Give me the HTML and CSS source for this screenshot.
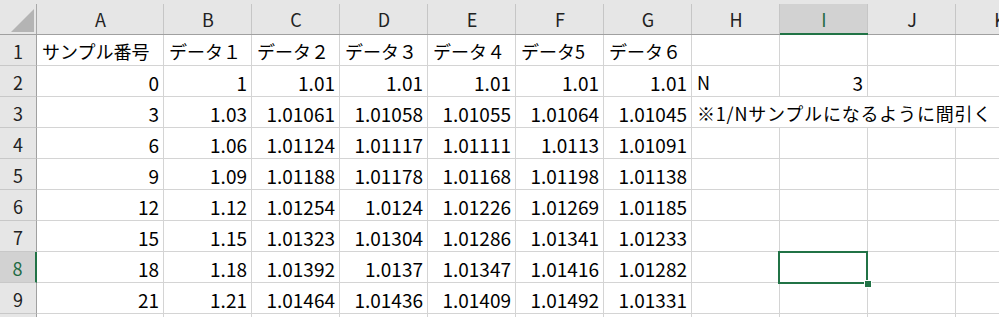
FILE: index.html
```html
<!DOCTYPE html>
<html lang="ja">
<head>
    <meta charset="UTF-8">
    <title>Sheet1</title>
    <link rel="stylesheet" href="styles.css">
</head>
<body>
    <div class="sheet">
        <div class="hd corner">
            <svg width="36" height="34" viewBox="0 0 36 34"><polygon points="10,32 33,32 33,9" fill="#b4b4b4"/></svg>
        </div>
        <div class="hd col">A</div>
        <div class="hd col">B</div>
        <div class="hd col">C</div>
        <div class="hd col">D</div>
        <div class="hd col">E</div>
        <div class="hd col">F</div>
        <div class="hd col">G</div>
        <div class="hd col">H</div>
        <div class="hd col sel-col">I</div>
        <div class="hd col">J</div>
        <div class="hd col">K</div>

        <div class="hd row">1</div>
        <div class="c">サンプル番号</div>
        <div class="c">データ１</div>
        <div class="c">データ２</div>
        <div class="c">データ３</div>
        <div class="c">データ４</div>
        <div class="c">データ5</div>
        <div class="c">データ６</div>
        <div class="c"></div>
        <div class="c"></div>
        <div class="c"></div>
        <div class="c"></div>

        <div class="hd row">2</div>
        <div class="c n">0</div>
        <div class="c n">1</div>
        <div class="c n">1.01</div>
        <div class="c n">1.01</div>
        <div class="c n">1.01</div>
        <div class="c n">1.01</div>
        <div class="c n">1.01</div>
        <div class="c">N</div>
        <div class="c n">3</div>
        <div class="c"></div>
        <div class="c"></div>

        <div class="hd row">3</div>
        <div class="c n">3</div>
        <div class="c n">1.03</div>
        <div class="c n">1.01061</div>
        <div class="c n">1.01058</div>
        <div class="c n">1.01055</div>
        <div class="c n">1.01064</div>
        <div class="c n">1.01045</div>
        <div class="c note">※1/Nサンプルになるように間引く</div>

        <div class="hd row">4</div>
        <div class="c n">6</div>
        <div class="c n">1.06</div>
        <div class="c n">1.01124</div>
        <div class="c n">1.01117</div>
        <div class="c n">1.01111</div>
        <div class="c n">1.0113</div>
        <div class="c n">1.01091</div>
        <div class="c"></div>
        <div class="c"></div>
        <div class="c"></div>
        <div class="c"></div>

        <div class="hd row">5</div>
        <div class="c n">9</div>
        <div class="c n">1.09</div>
        <div class="c n">1.01188</div>
        <div class="c n">1.01178</div>
        <div class="c n">1.01168</div>
        <div class="c n">1.01198</div>
        <div class="c n">1.01138</div>
        <div class="c"></div>
        <div class="c"></div>
        <div class="c"></div>
        <div class="c"></div>

        <div class="hd row">6</div>
        <div class="c n">12</div>
        <div class="c n">1.12</div>
        <div class="c n">1.01254</div>
        <div class="c n">1.0124</div>
        <div class="c n">1.01226</div>
        <div class="c n">1.01269</div>
        <div class="c n">1.01185</div>
        <div class="c"></div>
        <div class="c"></div>
        <div class="c"></div>
        <div class="c"></div>

        <div class="hd row">7</div>
        <div class="c n">15</div>
        <div class="c n">1.15</div>
        <div class="c n">1.01323</div>
        <div class="c n">1.01304</div>
        <div class="c n">1.01286</div>
        <div class="c n">1.01341</div>
        <div class="c n">1.01233</div>
        <div class="c"></div>
        <div class="c"></div>
        <div class="c"></div>
        <div class="c"></div>

        <div class="hd row sel-row">8</div>
        <div class="c n">18</div>
        <div class="c n">1.18</div>
        <div class="c n">1.01392</div>
        <div class="c n">1.0137</div>
        <div class="c n">1.01347</div>
        <div class="c n">1.01416</div>
        <div class="c n">1.01282</div>
        <div class="c"></div>
        <div class="c active"></div>
        <div class="c"></div>
        <div class="c"></div>

        <div class="hd row">9</div>
        <div class="c n">21</div>
        <div class="c n">1.21</div>
        <div class="c n">1.01464</div>
        <div class="c n">1.01436</div>
        <div class="c n">1.01409</div>
        <div class="c n">1.01492</div>
        <div class="c n">1.01331</div>
        <div class="c"></div>
        <div class="c"></div>
        <div class="c"></div>
        <div class="c"></div>

        <div class="hd row"></div>
        <div class="c"></div>
        <div class="c"></div>
        <div class="c"></div>
        <div class="c"></div>
        <div class="c"></div>
        <div class="c"></div>
        <div class="c"></div>
        <div class="c"></div>
        <div class="c"></div>
        <div class="c"></div>
        <div class="c"></div>
    </div>
</body>
</html>
```

FILE: styles.css
```css
body {
    margin: 0;
    overflow: hidden;
    background: #fff;
    font-family: "Noto Sans CJK JP", "Noto Sans", sans-serif;
    font-size: 18px;
    color: #000;
}
.sheet {
    display: grid;
    grid-template-columns: 37px 127px repeat(10, 88px);
    grid-template-rows: 35px repeat(10, 31px);
    width: 1132px;
}
.sheet > div {
    box-sizing: border-box;
    display: flex;
    align-items: center;
    white-space: nowrap;
    overflow: hidden;
}
.c {
    border-right: 1px solid #d4d4d4;
    border-bottom: 1px solid #d4d4d4;
    padding: 2px 4px 0 5px;
}
.n {
    justify-content: flex-end;
    font-size: 19px;
}
.note {
    grid-column: span 4;
    border-right: none;
    letter-spacing: 0.8px;
}
.hd {
    background: #e6e6e6;
    justify-content: center;
    color: #222;
}
.col {
    border-bottom: 1px solid #a0a0a0;
    background: linear-gradient(#c6c6c6, #c6c6c6) right 4px / 1px calc(100% - 4px) no-repeat, #e6e6e6;
    padding-top: 4px;
}
.corner {
    border-bottom: 1px solid #a0a0a0;
    background: linear-gradient(#a8a8a8, #a8a8a8) right 4px / 1px calc(100% - 4px) no-repeat, #e6e6e6;
    align-items: flex-start !important;
}
.corner svg {
    display: block;
}
.row {
    border-right: 1px solid #a0a0a0;
    border-bottom: 1px solid #c8c8c8;
    padding-top: 2px;
}
.sel-col {
    background: linear-gradient(#c6c6c6, #c6c6c6) right 4px / 1px calc(100% - 4px) no-repeat,
        linear-gradient(#e6e6e6 4px, #d2d2d2 4px);
    border-bottom: 2px solid #217346;
    color: #1e6b43;
}
.sel-row {
    background: #d2d2d2;
    border-right: 2px solid #217346;
    color: #1e6b43;
}
.active {
    position: relative;
    overflow: visible !important;
}
.active::after {
    content: "";
    position: absolute;
    left: -2px;
    top: -1px;
    width: 90px;
    height: 33px;
    box-sizing: border-box;
    border: 2px solid #217346;
}
.active::before {
    content: "";
    position: absolute;
    left: 84px;
    top: 28px;
    width: 6px;
    height: 6px;
    background: #217346;
    border: 1px solid #fff;
    z-index: 1;
}
```
